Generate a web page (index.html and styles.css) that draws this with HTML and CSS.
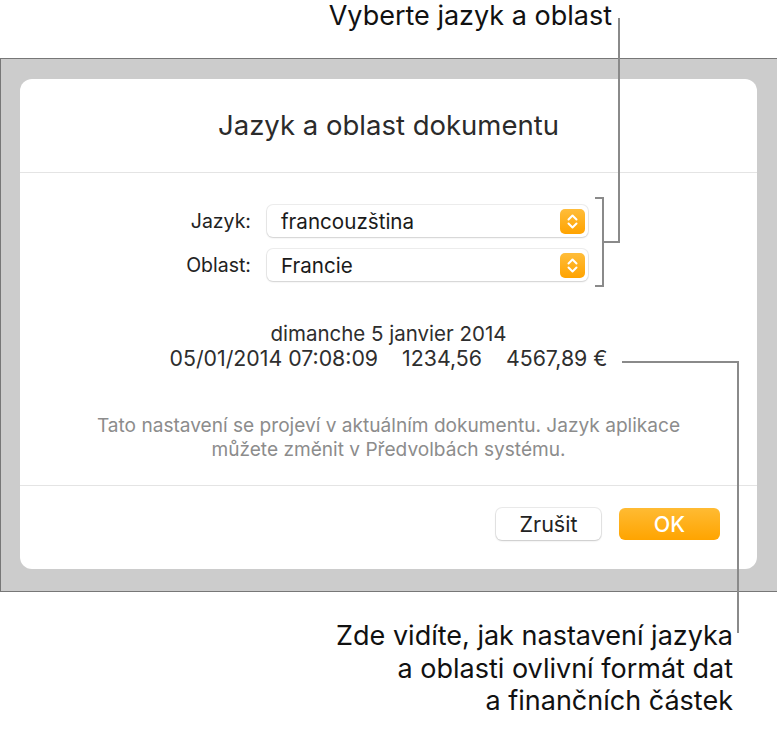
FILE: index.html
```html
<!DOCTYPE html>
<html lang="cs">
<head>
<meta charset="utf-8">
<title>Jazyk a oblast dokumentu</title>
<link rel="stylesheet" href="styles.css">
</head>
<body>
<div class="page">
  <p class="note note-top">Vyberte jazyk a oblast</p>
  <div class="frame">
    <div class="dialog">
      <header class="dlg-title">Jazyk a oblast dokumentu</header>
      <section class="dlg-body">
        <div class="form">
          <span class="lbl">Jazyk:</span>
          <div class="popup"><span class="popup-text">francouzština</span>
            <span class="stepper"><svg viewBox="0 0 25 25" width="25" height="25"><path d="M8.5 10.5 L12.5 6.5 L16.5 10.5 M8.5 14.5 L12.5 18.5 L16.5 14.5" fill="none" stroke="#fff" stroke-width="2" stroke-linecap="round" stroke-linejoin="round"/></svg></span>
          </div>
          <span class="lbl">Oblast:</span>
          <div class="popup"><span class="popup-text">Francie</span>
            <span class="stepper"><svg viewBox="0 0 25 25" width="25" height="25"><path d="M8.5 10.5 L12.5 6.5 L16.5 10.5 M8.5 14.5 L12.5 18.5 L16.5 14.5" fill="none" stroke="#fff" stroke-width="2" stroke-linecap="round" stroke-linejoin="round"/></svg></span>
          </div>
        </div>
        <div class="sample">
          <div class="sample-line">dimanche 5 janvier 2014</div>
          <div class="sample-line sample-row"><span>05/01/2014 07:08:09</span><span>1234,56</span><span>4567,89 €</span></div>
        </div>
        <p class="help">Tato nastavení se projeví v aktuálním dokumentu. Jazyk aplikace<br>můžete změnit v Předvolbách systému.</p>
      </section>
      <footer class="dlg-foot">
        <button class="btn btn-cancel">Zrušit</button>
        <button class="btn btn-ok">OK</button>
      </footer>
    </div>
  </div>
  <p class="note note-bottom">Zde vidíte, jak nastavení jazyka<br>a oblasti ovlivní formát dat<br>a finančních částek</p>
  <svg class="callouts" width="777" height="732" viewBox="0 0 777 732">
    <g fill="none" stroke="#8a8a8a" stroke-width="2">
      <path d="M595 198 H603 V286 H595"/>
      <path d="M603 242 H619 V18"/>
      <path d="M622 362 H738 V633"/>
    </g>
  </svg>
</div>
</body>
</html>
```

FILE: styles.css
```css
* { box-sizing: border-box; }
html, body { margin: 0; padding: 0; background: #fff; }
body { font-family: Inter, Roboto, "Liberation Sans", sans-serif; }

.page {
  position: relative;
  width: 777px;
  height: 732px;
  overflow: hidden;
}

.note {
  margin: 0;
  color: #111;
  font-size: 27px;
  text-align: right;
}
.note-top {
  height: 58px;
  line-height: 32px;
  padding-right: 165px;
}
.note-bottom {
  margin-top: 28px;
  line-height: 32.5px;
  padding-right: 44px;
}

.frame {
  background: #cccccc;
  border-top: 1px solid #777;
  border-bottom: 1px solid #777;
  border-left: 1px solid #777;
  padding: 20px 20px 22px 19px;
}

.dialog {
  background: #fff;
  border-radius: 12px;
  width: 737px;
  height: 490px;
  display: flex;
  flex-direction: column;
}

.dlg-title {
  height: 94px;
  border-bottom: 1px solid #e4e4e4;
  display: flex;
  align-items: center;
  justify-content: center;
  font-size: 27.5px;
  color: #2b2b2b;
  padding-bottom: 2px;
}

.dlg-body {
  height: 313px;
  border-bottom: 1px solid #e4e4e4;
  padding-top: 32px;
  display: flex;
  flex-direction: column;
}

.form {
  display: grid;
  grid-template-columns: 231px 321px;
  column-gap: 16px;
  row-gap: 12px;
  align-items: center;
}
.lbl {
  text-align: right;
  font-size: 19.5px;
  color: #222;
}
.popup {
  height: 32px;
  background: #fff;
  border-radius: 6px;
  box-shadow: 0 0 0 1px rgba(0,0,0,0.07), 0 1px 2px rgba(0,0,0,0.12);
  display: flex;
  align-items: center;
  justify-content: space-between;
  padding: 0 3px 0 14px;
}
.popup-text {
  font-size: 20.6px;
  color: #1a1a1a;
}
.stepper {
  width: 25px;
  height: 25px;
  border-radius: 5px;
  background: linear-gradient(#ffbd3a, #ffa300);
  display: flex;
}

.sample {
  margin-top: 41px;
  text-align: center;
  font-size: 20.5px;
  line-height: 24px;
  color: #2e2e2e;
}
.sample-row {
  display: flex;
  justify-content: center;
  gap: 24px;
  font-size: 21.3px;
}

.help {
  margin: 43px 0 0;
  text-align: center;
  font-size: 19.1px;
  line-height: 24px;
  color: #8c8c8c;
}

.dlg-foot {
  flex: 1;
  display: flex;
  justify-content: flex-end;
  align-items: flex-start;
  gap: 18px;
  padding: 22px 37px 0 0;
}
.btn {
  height: 32px;
  border: none;
  border-radius: 6px;
  font-family: Inter, Roboto, "Liberation Sans", sans-serif;
  font-size: 21.5px;
  padding: 0;
}
.btn-cancel {
  width: 105px;
  background: #fff;
  color: #222;
  box-shadow: 0 0 0 1px rgba(0,0,0,0.08), 0 1px 2px rgba(0,0,0,0.15);
}
.btn-ok {
  width: 101px;
  background: linear-gradient(#ffbb33, #ffa400);
  color: #fff;
  font-weight: 500;
}

.callouts {
  position: absolute;
  left: 0;
  top: 0;
  pointer-events: none;
}
```
